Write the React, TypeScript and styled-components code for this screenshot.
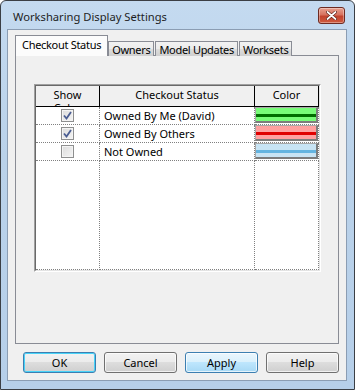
import React from 'react';
import styled, { createGlobalStyle, css } from 'styled-components';

const GlobalStyle = createGlobalStyle`
  html, body {
    margin: 0;
    padding: 0;
    background: #ffffff;
  }
  body {
    font-family: "Noto Sans", "DejaVu Sans", sans-serif;
    font-size: 11px;
    color: #000;
  }
`;

const Window = styled.div`
  box-sizing: border-box;
  width: 355px;
  height: 390px;
  display: flex;
  flex-direction: column;
  border: 1px solid #3b3f45;
  border-radius: 6px 6px 0 0;
  background: linear-gradient(180deg, #c4daf0 0%, #bad2ea 40%, #b6cfe9 100%);
  padding: 0 7px 8px 6px;
`;

const TitleBar = styled.div`
  height: 28px;
  display: flex;
  align-items: center;
  justify-content: space-between;
  padding: 3px 2px 0 6px;
  box-sizing: border-box;
`;

const Title = styled.span`
  font-size: 11.2px;
  color: #1e1e1e;
`;

const CloseButton = styled.button`
  width: 27px;
  height: 17px;
  padding: 0;
  margin-top: -3px;
  border: 1px solid #6d2b22;
  border-radius: 3px;
  background: linear-gradient(180deg, #e8a190 0%, #d7725f 45%, #c2432e 55%, #cf5b3f 100%);
  box-shadow: inset 0 0 0 1px rgba(255, 255, 255, 0.35);
  display: flex;
  align-items: center;
  justify-content: center;
`;

const Client = styled.div`
  flex: 1;
  display: flex;
  flex-direction: column;
  background: #f0f0f0;
  border: 1px solid #8b9db3;
  padding: 5px 7px 7px 7px;
  min-height: 0;
`;

const TabStrip = styled.div`
  display: flex;
  align-items: flex-end;
  height: 21px;
  margin-bottom: -1px;
  position: relative;
  z-index: 1;
`;

const Tab = styled.div<{ $active?: boolean }>`
  box-sizing: border-box;
  height: 15px;
  padding: 0 3px;
  margin-right: 1px;
  border: 1px solid #898c95;
  border-bottom: none;
  background: linear-gradient(180deg, #f2f2f2 0%, #ebebeb 50%, #dddddd 50%, #cfcfcf 100%);
  display: flex;
  align-items: center;
  line-height: 13px;
  letter-spacing: -0.3px;
  ${(p) =>
    p.$active &&
    css`
      height: 21px;
      padding: 0 6px 3px 6px;
      margin-right: 0;
      background: #fcfcfc;
    `}
`;

const Panel = styled.div`
  flex: 1;
  background: #f0f0f0;
  border: 1px solid #898c95;
  padding: 28px 17px 0 18px;
  display: flex;
  flex-direction: column;
`;

const GridFrame = styled.div`
  height: 188px;
  box-sizing: border-box;
  border: 1px solid;
  border-color: #a0a0a0 #ffffff #ffffff #a0a0a0;
`;

const Grid = styled.div`
  height: 100%;
  box-sizing: border-box;
  border: 1px solid;
  border-color: #696969 #e3e3e3 #e3e3e3 #696969;
  background: #ffffff;
  display: grid;
  grid-template-columns: 64px 155px 64px;
  grid-template-rows: 21px 18px 18px 18px 1fr;
`;

const HeaderCell = styled.div`
  box-sizing: border-box;
  background: #f0f0f0;
  border-right: 1px solid #000;
  border-bottom: 1px solid #000;
  text-align: center;
  line-height: 13px;
  padding: 2px 8px 0 8px;
  overflow: hidden;
`;

const Cell = styled.div<{ $center?: boolean }>`
  box-sizing: border-box;
  border-right: 1px dotted #808080;
  border-bottom: 1px dotted #808080;
  display: flex;
  align-items: center;
  justify-content: ${(p) => (p.$center ? 'center' : 'flex-start')};
  padding-left: ${(p) => (p.$center ? '0' : '4px')};
  white-space: nowrap;
`;

const CheckBox = styled.span`
  box-sizing: border-box;
  width: 13px;
  height: 13px;
  border: 1px solid #8e8f8f;
  background: linear-gradient(135deg, #dcdcdc 0%, #f4f4f4 100%);
  box-shadow: inset 0 0 0 1px #f4f4f4;
  display: flex;
  align-items: center;
  justify-content: center;
`;

const Swatch = styled.div<{ $fill: string; $line: string }>`
  box-sizing: border-box;
  width: 63px;
  height: 16px;
  border: 1px solid #a8a8a8;
  border-right: 2px solid #7c7c7c;
  border-bottom: 2px solid #7c7c7c;
  background: linear-gradient(
    180deg,
    ${(p) => p.$fill} 0,
    ${(p) => p.$fill} 6px,
    ${(p) => p.$line} 6px,
    ${(p) => p.$line} 9px,
    ${(p) => p.$fill} 9px
  );
`;

const SwatchCell = styled(Cell)`
  padding-left: 0;
  align-items: flex-start;
`;

const ButtonRow = styled.div`
  display: flex;
  justify-content: flex-end;
  gap: 8px;
  margin-top: 8px;
`;

const Button = styled.button<{ $variant?: 'default' | 'hover' }>`
  box-sizing: border-box;
  width: 73px;
  height: 21px;
  padding: 0;
  font-family: inherit;
  font-size: 11px;
  color: #000;
  border: 1px solid #707070;
  border-radius: 3px;
  background: linear-gradient(180deg, #f2f2f2 0%, #ebebeb 50%, #dddddd 50%, #cfcfcf 100%);
  box-shadow: inset 0 0 0 1px rgba(255, 255, 255, 0.7);
  ${(p) =>
    p.$variant === 'default' &&
    css`
      border-color: #3c7fb1;
      box-shadow: inset 0 0 0 1px #48d3f8;
    `}
  ${(p) =>
    p.$variant === 'hover' &&
    css`
      border-color: #3c7fb1;
      background: linear-gradient(180deg, #eaf6fd 0%, #d9f0fc 50%, #bee6fd 50%, #a7d9f5 100%);
    `}
`;

const Check = () => (
  <svg width="9" height="9" viewBox="0 0 9 9">
    <path d="M1 4.5 L3.5 7.5 L8 1" fill="none" stroke="#4a5d92" strokeWidth="1.8" />
  </svg>
);

const CloseGlyph = () => (
  <svg width="11" height="9" viewBox="0 0 11 9">
    <path d="M1.5 1 L9.5 8 M9.5 1 L1.5 8" stroke="#5a2018" strokeWidth="3" strokeLinecap="round" />
    <path d="M1.5 1 L9.5 8 M9.5 1 L1.5 8" stroke="#ffffff" strokeWidth="1.7" strokeLinecap="round" />
  </svg>
);

const rows = [
  { checked: true, label: 'Owned By Me (David)', fill: '#78fc78', line: '#006e00' },
  { checked: true, label: 'Owned By Others', fill: '#ffa0a0', line: '#e00000' },
  { checked: false, label: 'Not Owned', fill: '#c8e4f4', line: '#64b4e0' },
];

export default function App() {
  return (
    <>
      <GlobalStyle />
      <Window>
        <TitleBar>
          <Title>Worksharing Display Settings</Title>
          <CloseButton aria-label="Close">
            <CloseGlyph />
          </CloseButton>
        </TitleBar>
        <Client>
          <TabStrip>
            <Tab $active>Checkout Status</Tab>
            <Tab>Owners</Tab>
            <Tab>Model Updates</Tab>
            <Tab>Worksets</Tab>
          </TabStrip>
          <Panel>
            <GridFrame>
              <Grid>
                <HeaderCell>Show Color</HeaderCell>
                <HeaderCell>Checkout Status</HeaderCell>
                <HeaderCell>Color</HeaderCell>
                {rows.map((r) => (
                  <React.Fragment key={r.label}>
                    <Cell $center>
                      <CheckBox>{r.checked && <Check />}</CheckBox>
                    </Cell>
                    <Cell>{r.label}</Cell>
                    <SwatchCell>
                      <Swatch $fill={r.fill} $line={r.line} />
                    </SwatchCell>
                  </React.Fragment>
                ))}
                <Cell />
                <Cell />
                <Cell />
              </Grid>
            </GridFrame>
          </Panel>
          <ButtonRow>
            <Button $variant="default">OK</Button>
            <Button>Cancel</Button>
            <Button $variant="hover">Apply</Button>
            <Button>Help</Button>
          </ButtonRow>
        </Client>
      </Window>
    </>
  );
}
